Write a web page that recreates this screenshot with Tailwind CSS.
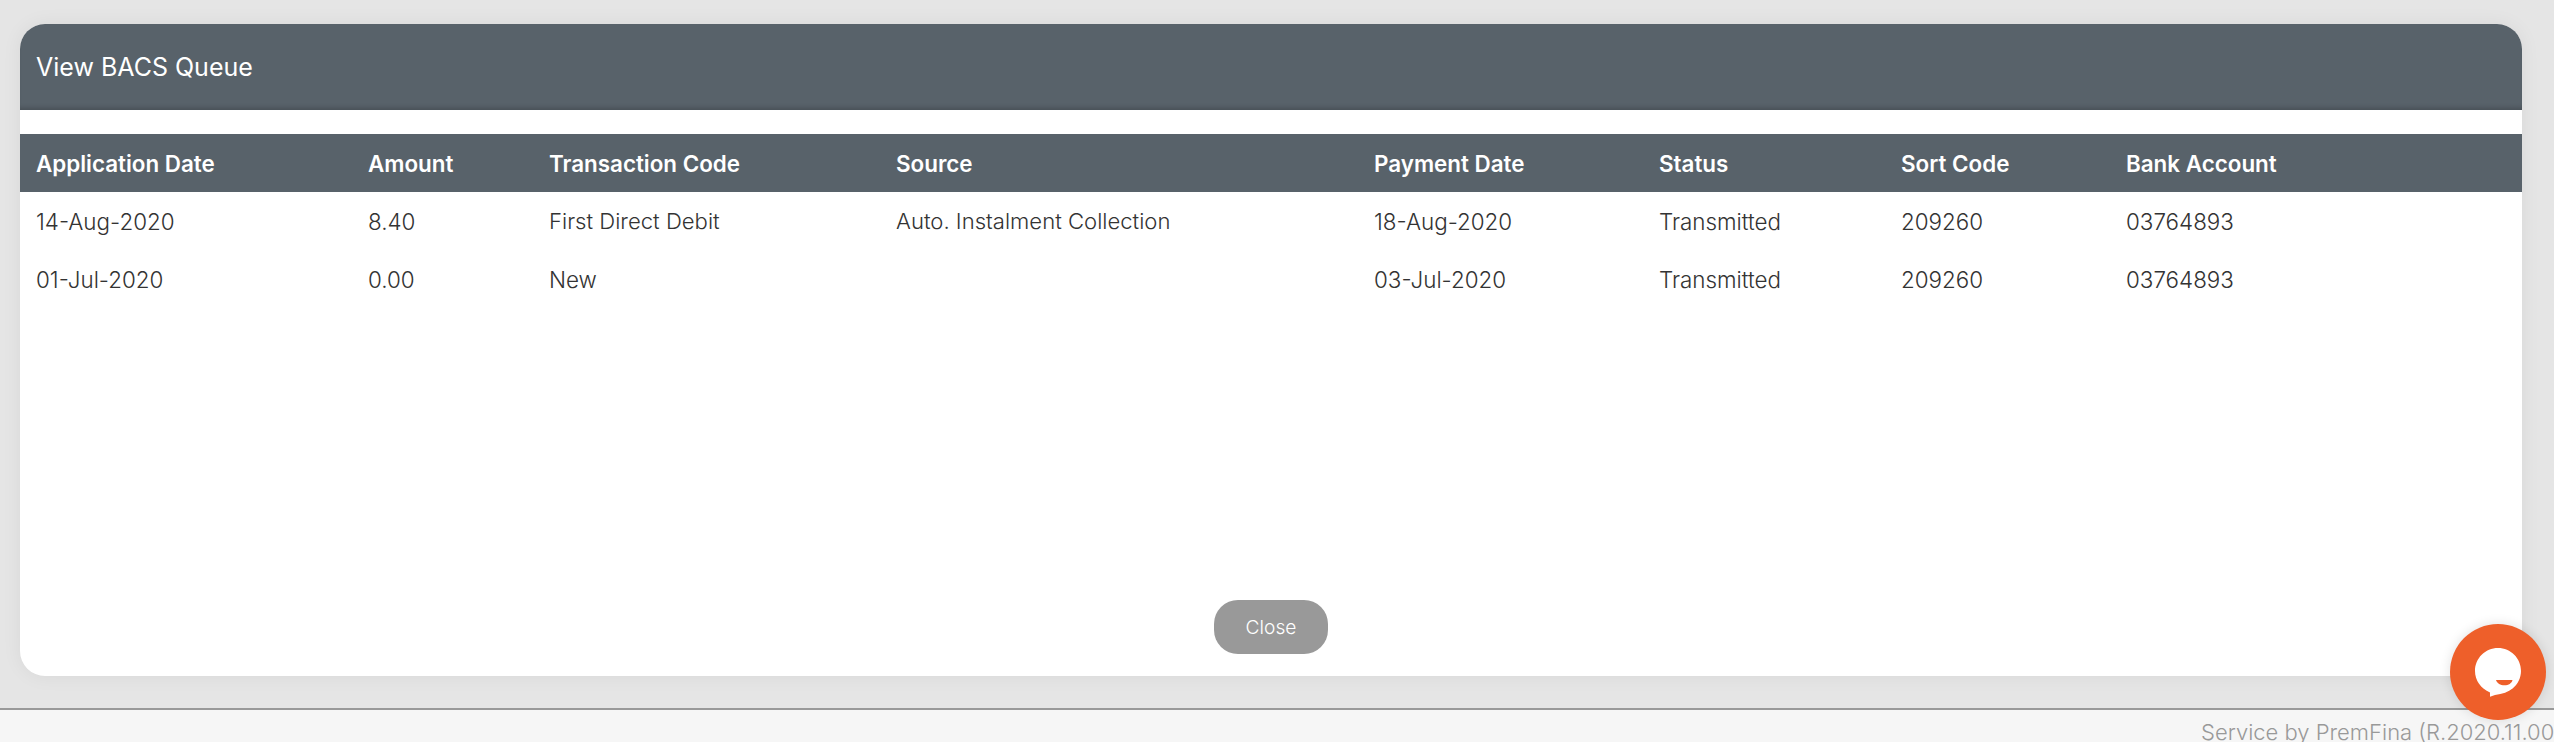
<html>
	<head>
		<title>View BACS Queue</title>
		<script src="https://cdn.jsdelivr.net/npm/@tailwindcss/browser@4"></script>
	</head>
	<body class="bg-[#e5e5e5] font-['Inter',sans-serif] antialiased h-[742px] overflow-hidden flex flex-col">
		<main class="h-[708px] pt-6 pl-5 pr-8">
			<section class="h-[652px] bg-white rounded-[25px] shadow-[0_0_20px_rgba(0,0,0,0.06)] flex flex-col overflow-hidden">
				<header class="h-[86px] shrink-0 bg-[#58626a] shadow-[inset_0_-5px_5px_-3px_rgba(0,0,0,0.2)] flex items-center pl-4 pt-[2px] text-white text-[25px]">View BACS Queue</header>
				<table class="mt-6 w-full table-fixed text-left text-[22.4px] font-light text-[#333]">
					<colgroup>
						<col class="w-[332px]">
						<col class="w-[181px]">
						<col class="w-[347px]">
						<col class="w-[478px]">
						<col class="w-[285px]">
						<col class="w-[242px]">
						<col class="w-[225px]">
						<col>
					</colgroup>
					<thead class="bg-[#58626a] text-white">
						<tr class="h-[58px] [&>th]:pl-4 [&>th]:font-semibold">
							<th>Application Date</th>
							<th>Amount</th>
							<th>Transaction Code</th>
							<th>Source</th>
							<th>Payment Date</th>
							<th>Status</th>
							<th>Sort Code</th>
							<th>Bank Account</th>
						</tr>
					</thead>
					<tbody>
						<tr class="h-[58px] [&>td]:pl-4">
							<td>14-Aug-2020</td>
							<td>8.40</td>
							<td class="text-[22.1px]">First Direct Debit</td>
							<td class="text-[22.1px]">Auto. Instalment Collection</td>
							<td>18-Aug-2020</td>
							<td>Transmitted</td>
							<td>209260</td>
							<td>03764893</td>
						</tr>
						<tr class="h-[58px] [&>td]:pl-4">
							<td>01-Jul-2020</td>
							<td>0.00</td>
							<td>New</td>
							<td></td>
							<td>03-Jul-2020</td>
							<td>Transmitted</td>
							<td>209260</td>
							<td>03764893</td>
						</tr>
					</tbody>
				</table>
				<div class="mt-auto pb-[22px] flex justify-center">
					<button class="w-[114px] h-[54px] rounded-[24px] bg-[#999] text-white font-light text-[19.2px]">Close</button>
				</div>
			</section>
		</main>
		<footer class="h-[34px] border-t-2 border-[#999] bg-[#f6f6f6] pl-[2201px] whitespace-nowrap overflow-hidden text-[22px] leading-[32px] pt-[6px] font-light text-[#999]">Service by PremFina (R.2020.11.00)</footer>
		<button class="absolute left-[2450px] top-[624px] w-24 h-24 rounded-full bg-[#ee5f2a] shadow-[0_0_12px_rgba(0,0,0,0.12)]">
			<svg viewBox="0 0 96 96" class="w-24 h-24">
				<path fill="#fff" d="M48 24c-12.700 0-23 10.300-23 23 0 9.500 5.800 17.700 15 21.400l0 4.400 5-1.800c7.500-.9 13.500-3 17.600-6.500C67.700 60.300 71 54 71 47c0-12.700-10.300-23-23-23z"/>
				<path fill="#ee5f2a" d="M46 56h16.500c-.7 3.300-4 5.300-8 5.300-4.200 0-7.500-2-8.500-5.300z"/>
			</svg>
		</button>
	</body>
</html>
